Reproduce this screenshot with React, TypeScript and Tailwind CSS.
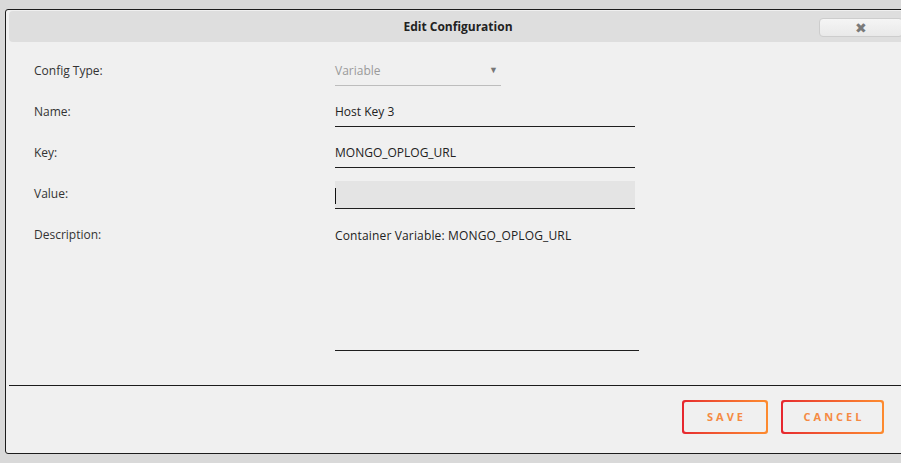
import React from 'react';

const FONT = { fontFamily: '"Open Sans", "Noto Sans", sans-serif' };

function Label({ children, className = '' }: { children: React.ReactNode; className?: string }) {
  return <div className={`text-[12px] leading-[16px] text-[#333] pt-[5px] ${className}`}>{children}</div>;
}

function Field({ value, filled, cursor }: { value?: string; filled?: boolean; cursor?: boolean }) {
  return (
    <div
      className={`w-[300px] h-[28px] border-b border-[#1e1e1e] flex items-end pb-[6px] text-[12px] leading-[16px] text-[#222] ${
        filled ? 'bg-[#e4e4e4]' : ''
      }`}
    >
      {cursor ? <span className="w-px h-[16px] bg-[#111] mb-[-2px]" /> : value}
    </div>
  );
}

function GradientButton({ label, width }: { label: string; width: string }) {
  return (
    <button className={`${width} h-[34px] rounded-[3px] p-[2px] bg-gradient-to-r from-[#e6252f] to-[#fd8b2f]`}>
      <span className="flex w-full h-full items-center justify-center rounded-[2px] bg-[#f0f0f0] text-[11px] font-bold tracking-[3px] text-[#f58a43] pl-[3px]">
        {label}
      </span>
    </button>
  );
}

export default function App() {
  return (
    <div className="w-[901px] h-[463px] bg-[#d9d9d9] pt-[9px] pl-[5px] overflow-hidden" style={FONT}>
      <div className="w-[906px] h-[445px] box-border border border-[#1c1c1c] rounded-l-[3px] bg-[#f0f0f0] flex flex-col">
        {/* header */}
        <div className="relative mx-[3px] mt-px h-[31px] rounded-[4px] bg-[#dedede] flex items-center justify-center">
          <span className="text-[12px] font-bold text-[#222]">Edit Configuration</span>
          <button className="absolute right-[4px] top-[7px] w-[84px] h-[19px] rounded-[4px] border border-[#cdcdcd] bg-gradient-to-b from-[#f5f5f5] to-[#e9e9e9] flex items-center justify-center text-[#7a7a7a] text-[14px] leading-none">
            ✖
          </button>
        </div>

        {/* form */}
        <div className="pl-[28px] pt-[16px] grid grid-cols-[301px_1fr] gap-y-[13px]">
          <Label>Config Type:</Label>
          <div className="w-[166px] h-[28px] border-b border-[#bdbdbd] flex items-end justify-between pb-[6px] text-[12px] leading-[16px] text-[#9a9a9a]">
            <span>Variable</span>
            <span className="text-[9px] text-[#777] mr-[3px] mb-[1px]">▼</span>
          </div>

          <Label>Name:</Label>
          <Field value="Host Key 3" />

          <Label>Key:</Label>
          <Field value="MONGO_OPLOG_URL" />

          <Label className="pt-[3px]">Value:</Label>
          <Field filled cursor />

          <Label>Description:</Label>
          <div className="w-[304px] h-[129px] border-b border-[#1e1e1e] pt-[6px] text-[12px] leading-[16px] text-[#222] tracking-[0.15px]">
            Container Variable: MONGO_OPLOG_URL
          </div>
        </div>

        <div className="mx-[3px] mt-[34px] border-t border-[#1c1c1c]" />

        <div className="flex justify-end gap-[13px] pt-[14px] pr-[26px]">
          <GradientButton label="SAVE" width="w-[86px]" />
          <GradientButton label="CANCEL" width="w-[103px]" />
        </div>
      </div>
    </div>
  );
}
